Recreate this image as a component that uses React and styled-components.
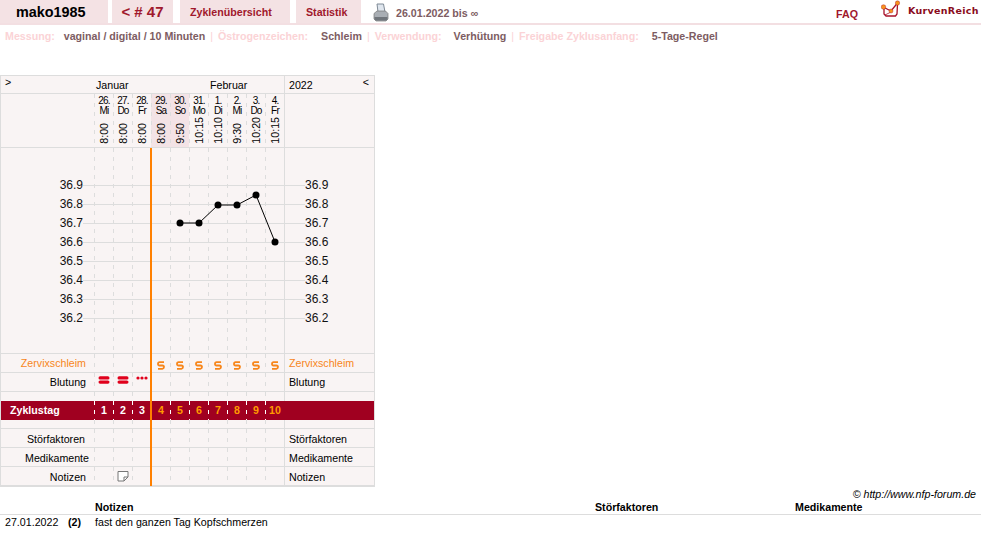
import React from "react";
import styled, { createGlobalStyle } from "styled-components";

const Global = createGlobalStyle`
  html, body { margin: 0; padding: 0; background: #fff; }
  body { font-family: "Liberation Sans", Arial, sans-serif; font-size: 10.67px; color: #000; }
`;
const Page = styled.div`width: 981px; height: 546px; overflow: hidden; position: relative;`;
const TopBar = styled.header`
  display: flex; height: 23px; border-bottom: 2px solid #f3dfe2; box-sizing: content-box;
`;
const Tab = styled.div`
  flex: none; width: ${p => p.$w}px; margin-right: ${p => p.$gap}px; background: #f4e2e4; box-sizing: border-box;
  display: flex; align-items: center; justify-content: ${p => p.$inset ? "flex-start" : "center"};
  padding-left: ${p => p.$inset || 0}px;
  font-weight: bold; font-size: ${p => p.$size || 10.67}px; color: ${p => p.$color || "#a0182c"};
`;
const Printer = styled.svg`flex: none; width: 16px; height: 19px; margin: 3px 7px 0 10px;`;
const RangeText = styled.div`font-weight: bold; font-size: 10.67px; color: #7d5c62; line-height: 24px; padding-top: 1px;`;
const Faq = styled.div`
  margin-left: auto; font-weight: bold; font-size: 10.67px; color: #a0182c; line-height: 28px;
`;
const Logo = styled.div`display: flex; margin: 0 2px 0 23px; width: 98px;`;
const LogoMark = styled.svg`flex: none; width: 22px; height: 20px;`;
const LogoText = styled.div`
  font-family: "DejaVu Sans", sans-serif; font-weight: bold; font-size: 9.5px; color: #8a0c20;
  margin-left: 5px; line-height: 21px; white-space: nowrap; letter-spacing: .3px;
`;
const InfoLine = styled.div`
  display: flex; height: 22px; align-items: center; padding-left: 5px; font-weight: bold; font-size: 10.67px; white-space: nowrap;
`;
const Label = styled.span`color: #fbd3d6; margin-right: ${p => p.$gap}px;`;
const Value = styled.span`color: #7d5c62;`;
const Sep = styled.span`color: #fbd3d6; font-weight: normal; margin: 0 5px;`;

const Chart = styled.section`
  width: 375px; box-sizing: border-box; margin-top: 28px; border: 1px solid #ddd; background: #f9f4f4;
`;
const Columns = "93px repeat(10, 19px) 1px 89px";
const Row = styled.div`
  display: grid; grid-template-columns: ${Columns}; height: ${p => p.$h || 19}px; box-sizing: border-box;
  border-bottom: ${p => p.$plain ? "none" : "1px solid #ddd"};
  background: ${p => p.$bg || "transparent"};
`;
const Day = styled.div`
  background-image: repeating-linear-gradient(to bottom, ${p => p.$dash || "#ddd"} 0 4px, transparent 4px 9px);
  background-size: 1px 100%; background-repeat: no-repeat;
  display: flex; align-items: center; justify-content: center; min-width: 0; padding-left: 1px;
  background-color: ${p => p.$tint ? "#f3e3e6" : "transparent"};
`;
const Divider = styled.div`background: #ddd;`;
const Side = styled.div`
  display: flex; align-items: center; font-size: 10.67px; white-space: nowrap; overflow: visible; min-width: 0;
  justify-content: ${p => p.$right ? "flex-end" : "flex-start"};
  padding: ${p => p.$low ? 2 : 0}px ${p => p.$right ? (p.$pad ?? 8) : 0}px ${p => p.$high ? 2 : 0}px ${p => p.$right ? 0 : (p.$left ?? 4)}px;
  color: ${p => p.$color || "#000"};
  font-weight: ${p => p.$bold ? "bold" : "normal"};
`;
const HeaderRow = styled.div`
  display: grid; grid-template-columns: 93px 114px 76px 1px 89px; height: 18px; box-sizing: border-box; border-bottom: 1px solid #ddd; line-height: 19px;
`;
const Arrow = styled.div`padding-left: 4px; line-height: 13px;`;
const Month = styled.div`padding-left: 2px;`;
const YearCell = styled.div`display: flex; justify-content: space-between; padding: 0 5px 0 4px;`;
const ArrowEnd = styled.span`line-height: 13px;`;
const DateCol = styled(Day)`
  flex-direction: column; justify-content: flex-start; align-items: center; padding: 2px 0 0 1px;
`;
const DateNum = styled.div`font-size: 10px; line-height: 10px; letter-spacing: -.8px; white-space: nowrap;`;
const Time = styled.div`
  writing-mode: vertical-rl; transform: rotate(180deg); font-size: 10.67px; line-height: 13px;
  margin-top: auto; margin-bottom: 3px; white-space: nowrap;
`;
const ChartArea = styled.div`position: relative; height: 206px; box-sizing: border-box; padding-top: 28px; border-bottom: 1px solid #ddd;`;
const TempRow = styled.div`
  display: grid; grid-template-columns: 82px 222px 60px; height: 19px; align-items: center; font-size: 12px; color: #111;
`;
const TempLabelLeft = styled.div`text-align: right; line-height: 18px; padding-bottom: 1px;`;
const TempLabelRight = styled.div`line-height: 18px; padding-bottom: 1px;`;
const TempLine = styled.div`height: 1px; background: #ddd;`;
const DayColumns = styled.div`
  position: absolute; left: 93px; top: 0; bottom: 0; width: 190px; display: grid; grid-template-columns: repeat(10, 19px);
`;
const RightEdge = styled.div`position: absolute; left: 283px; top: 0; bottom: 0; width: 1px; background: #ddd;`;
const Curve = styled.svg`position: absolute; left: 93px; top: 0; width: 190px; height: 205px;`;
const Body = styled.div`position: relative;`;
const OrangeLine = styled.div`position: absolute; left: 149px; top: 0; bottom: 0; width: 2px; background: #ff8000;`;
const CycleNum = styled.span`font-weight: bold; font-size: 10.67px; margin-bottom: 2px; color: ${p => p.$color};`;
const FootCredit = styled.div`
  text-align: right; font-style: italic; font-size: 10.67px; padding: 1px 5px 0 0; line-height: 13px; height: 13px;
`;
const NoteTable = styled.div`font-size: 10.67px;`;
const NoteHead = styled.div`
  display: grid; grid-template-columns: 95px 500px 200px 1fr; height: 13px; line-height: 13px; font-weight: bold; border-bottom: 1px solid #ddd;
`;
const NoteRow = styled.div`display: grid; grid-template-columns: 63px 27px 1fr; line-height: 15px; padding-left: 5px;`;
const Bold = styled.span`font-weight: bold;`;
const SMark = styled.svg`width: 8px; height: 9px; margin-top: 5px;`;
const BleedMark = styled.svg`width: 12px; height: 8px; margin-top: -4px;`;
const SpotMark = styled.svg`width: 12px; height: 4px; margin-top: -9px;`;
const NoteIcon = styled.svg`width: 12px; height: 12px;`;

const days = [
  ["26.", "Mi", "8:00"], ["27.", "Do", "8:00"], ["28.", "Fr", "8:00"], ["29.", "Sa", "8:00", 1], ["30.", "So", "9:50", 1],
  ["31.", "Mo", "10:15"], ["1.", "Di", "10:10"], ["2.", "Mi", "9:30"], ["3.", "Do", "10:20"], ["4.", "Fr", "10:15"],
];
const temps = ["36.9", "36.8", "36.7", "36.6", "36.5", "36.4", "36.3", "36.2"];
const pts = [[86, 75], [105, 75], [124, 57], [143, 57], [162, 47], [181, 94]];
const ten = [0, 1, 2, 3, 4, 5, 6, 7, 8, 9];

const SGlyph = () => (
  <SMark viewBox="0 0 8 9"><path d="M7 1.2H2.6Q1 1.2 1 2.9T2.6 4.5H5.4Q7 4.5 7 6.1T5.4 7.8H1" fill="none" stroke="#f7861b" strokeWidth="1.8" /></SMark>
);
const Bleed = () => (
  <BleedMark viewBox="0 0 12 8"><rect x="0.5" y="0.3" width="11" height="3.2" rx="1.6" fill="#e0001b" /><rect x="0.5" y="4.5" width="11" height="3.2" rx="1.6" fill="#e0001b" /></BleedMark>
);
const Spot = () => (
  <SpotMark viewBox="0 0 12 4"><circle cx="2" cy="2" r="1.6" fill="#e0001b" /><circle cx="6" cy="2" r="1.6" fill="#e0001b" /><circle cx="10" cy="2" r="1.6" fill="#e0001b" /></SpotMark>
);
const Note = () => (
  <NoteIcon viewBox="0 0 12 12"><path d="M1 1.5H11V7L7 11H1Z" fill="#fff" stroke="#777" /><path d="M7 11V7H11" fill="none" stroke="#777" /></NoteIcon>
);

const Blank = ({ h, plain }) => (
  <Row $h={h} $plain={plain}><Side />{ten.map(i => <Day key={i} />)}<Divider /><Side /></Row>
);
const Labeled = ({ name, color, pad, low, cells }) => (
  <Row>
    <Side $right $color={color} $pad={pad} $low={low}>{name}</Side>
    {ten.map(i => <Day key={i}>{cells && cells(i)}</Day>)}
    <Divider />
    <Side $color={color} $low={low}>{name}</Side>
  </Row>
);

export default function App() {
  return (
    <Page>
      <Global />
      <TopBar>
        <Tab $w={108} $gap={4} $size={14.4} $color="#000" $inset={16}>mako1985</Tab>
        <Tab $w={61} $gap={7} $size={15}>&lt; # 47</Tab>
        <Tab $w={110} $gap={6} $inset={10}>Zyklenübersicht</Tab>
        <Tab $w={65} $gap={2} $inset={10}>Statistik</Tab>
        <Printer viewBox="0 0 16 19">
          <path d="M4 1H10.5L12 9H5Z" fill="#dfe6ee" stroke="#7f8a96" />
          <path d="M1 10.5L4 8H12.5L15 10.5V16L13 18H3L1 16Z" fill="#a9aeb4" stroke="#777" strokeWidth=".7" />
          <path d="M1.5 14H14.5V16.5L13 17.5H3L1.5 16.5Z" fill="#70757b" />
        </Printer>
        <RangeText>26.01.2022 bis ∞</RangeText>
        <Faq>FAQ</Faq>
        <Logo>
          <LogoMark viewBox="0 0 22 20">
            <path d="M3 8V14L5 16H14.5L16 14L16.5 4" fill="none" stroke="#a8122a" strokeWidth="1.3" />
            <path d="M2 7L10 11L16.5 3" fill="none" stroke="#a8122a" strokeWidth="1.3" />
            <path d="M4 15L10 12" fill="none" stroke="#a8122a" strokeWidth=".8" />
            <circle cx="2.5" cy="7" r="2.3" fill="#f7941d" stroke="#a8122a" strokeWidth=".4" />
            <circle cx="10" cy="11" r="2" fill="#f7941d" stroke="#a8122a" strokeWidth=".4" />
            <circle cx="16.5" cy="3" r="2.2" fill="#f7941d" stroke="#a8122a" strokeWidth=".4" />
          </LogoMark>
          <LogoText>KurvenReich</LogoText>
        </Logo>
      </TopBar>
      <InfoLine>
        <Label $gap={9}>Messung:</Label><Value>vaginal / digital / 10 Minuten</Value><Sep>|</Sep>
        <Label $gap={13}>Östrogenzeichen:</Label><Value>Schleim</Value><Sep>|</Sep>
        <Label $gap={12}>Verwendung:</Label><Value>Verhütung</Value><Sep>|</Sep>
        <Label $gap={13}>Freigabe Zyklusanfang:</Label><Value>5-Tage-Regel</Value>
      </InfoLine>
      <Chart>
        <HeaderRow>
          <Arrow>&gt;</Arrow>
          <Month>Januar</Month>
          <Month>Februar</Month>
          <Divider />
          <YearCell>2022<ArrowEnd>&lt;</ArrowEnd></YearCell>
        </HeaderRow>
        <Row $h={54}>
          <Side />
          {days.map(d => (
            <DateCol key={d[0]} $tint={d[3]}>
              <DateNum>{d[0]}</DateNum>
              <DateNum>{d[1]}</DateNum>
              <Time>{d[2]}</Time>
            </DateCol>
          ))}
          <Divider />
          <Side />
        </Row>
        <Body>
          <ChartArea>
            {temps.map(t => (
              <TempRow key={t}>
                <TempLabelLeft>{t}</TempLabelLeft>
                <TempLine />
                <TempLabelRight>{t}</TempLabelRight>
              </TempRow>
            ))}
            <DayColumns>{ten.map(i => <Day key={i} />)}</DayColumns>
            <RightEdge />
            <Curve viewBox="0 0 190 205">
              <polyline points={pts.map(p => p.join(",")).join(" ")} fill="none" stroke="#000" strokeWidth="1" />
              {pts.map(p => <circle key={p[0]} cx={p[0]} cy={p[1]} r="3.5" fill="#000" />)}
            </Curve>
          </ChartArea>
          <Labeled name="Zervixschleim" color="#f7861b" cells={i => i >= 3 ? <SGlyph /> : null} />
          <Labeled name="Blutung" cells={i => i < 2 ? <Bleed /> : i === 2 ? <Spot /> : null} />
          <Blank h={9} plain />
          <Row $bg="#a00020" $plain>
            <Side $bold $color="#fff" $left={9} $high>Zyklustag</Side>
            {ten.map(i => (
              <Day key={i} $dash="#fff">
                <CycleNum $color={i < 3 ? "#fff" : "#ff9a00"}>{i + 1}</CycleNum>
              </Day>
            ))}
            <Side /><Side />
          </Row>
          <Blank h={9} />
          <Labeled name="Störfaktoren" pad={9} low />
          <Labeled name="Medikamente" pad={5} low />
          <Labeled name="Notizen" low cells={i => i === 1 ? <Note /> : null} />
          <OrangeLine />
        </Body>
      </Chart>
      <FootCredit>© http://www.nfp-forum.de</FootCredit>
      <NoteTable>
        <NoteHead><span /><span>Notizen</span><span>Störfaktoren</span><span>Medikamente</span></NoteHead>
        <NoteRow><span>27.01.2022</span><Bold>(2)</Bold><span>fast den ganzen Tag Kopfschmerzen</span></NoteRow>
      </NoteTable>
    </Page>
  );
}
